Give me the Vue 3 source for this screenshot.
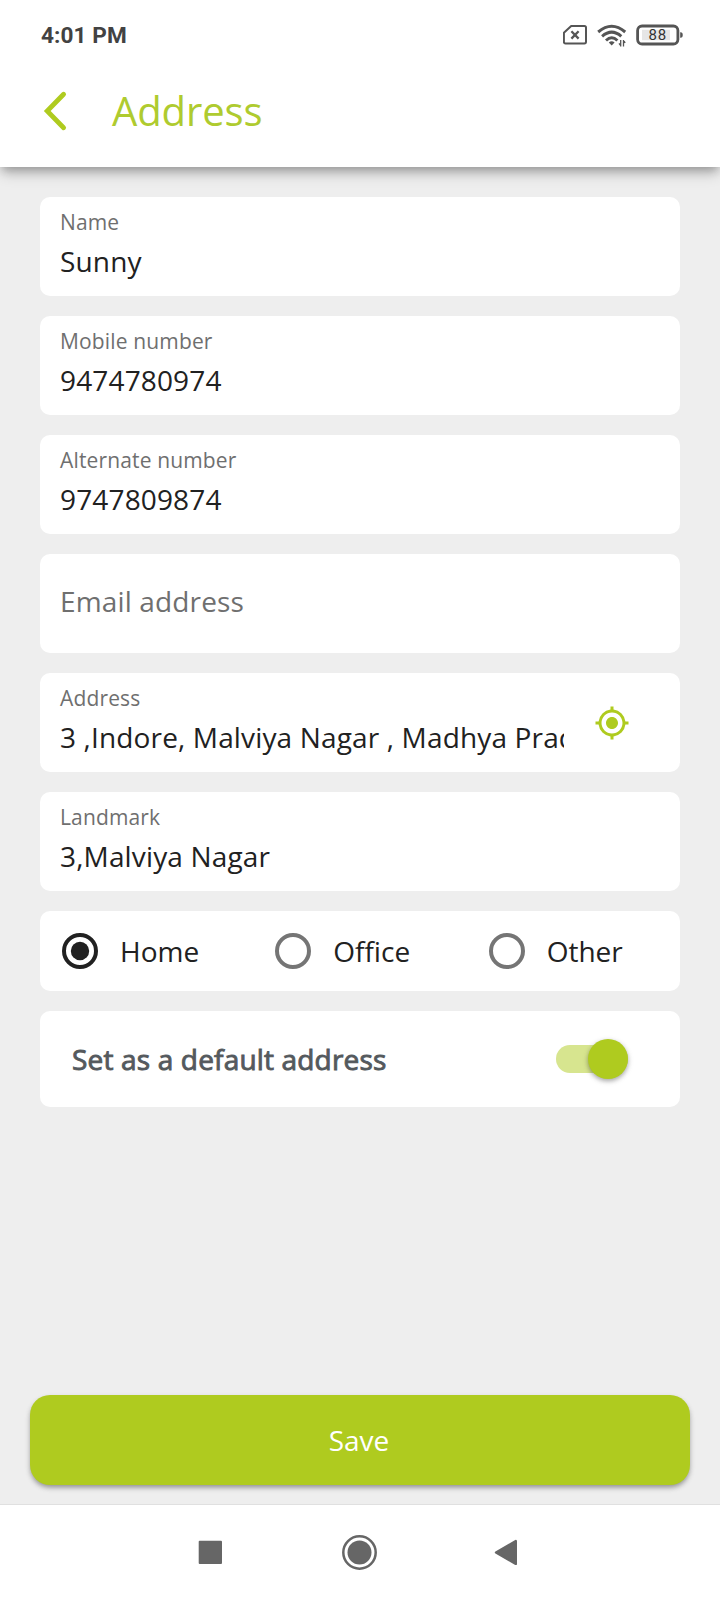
<script setup>
import { ref } from 'vue'

const fields = [
  { label: 'Name', value: 'Sunny' },
  { label: 'Mobile number', value: '9474780974' },
  { label: 'Alternate number', value: '9747809874' },
  { label: 'Email address', value: '' },
  { label: 'Address', value: '3 ,Indore, Malviya Nagar , Madhya Prad', locate: true },
  { label: 'Landmark', value: '3,Malviya Nagar' },
]
const kinds = ['Home', 'Office', 'Other']
const kind = ref('Home')
const isDefault = ref(true)
</script>

<template>
  <div class="screen">
    <header class="top">
      <div class="status">
        <span class="time">4:01 PM</span>
        <svg class="sys" width="120" height="24" viewBox="0 0 120 24" fill="none" stroke="#555">
          <path d="M8.2 3H21.4Q23 3 23 4.6V18.8Q23 20.4 21.4 20.4H2.4Q.9 20.4 .9 18.8V9.8Z" stroke-width="2" stroke-linejoin="round" />
          <path d="M8.4 8.2L15.6 15.6M15.6 8.2L8.4 15.6" stroke-width="2.3" />
          <g stroke-width="3">
            <path d="M35.2 9Q48.7 -2.4 62.2 9" />
            <path d="M39.1 13.3Q48.7 4.9 58.3 13.3" />
            <path d="M43 17.5Q48.7 12 54.4 17.5" />
          </g>
          <path d="M45.8 19.6Q48.7 17 51.6 19.6L48.7 22.4Z" fill="#555" stroke="none" />
          <path d="M57.7 17V23.4M60.5 17V23.4M56 20.4L57.7 22.6M60.5 17.5L62.2 19.8" stroke-width="1.3" />
          <rect x="74.6" y="3" width="40.3" height="18" rx="4.5" stroke-width="2.8" />
          <rect x="79" y="6.8" width="28" height="10.4" fill="#e6e6e6" stroke="none" />
          <path d="M117.2 9.2H118Q119.8 9.4 119.8 12T118 14.8H117.2Z" fill="#555" stroke="none" />
          <text x="94.8" y="17.2" class="pct" text-anchor="middle">88</text>
        </svg>
      </div>
      <div class="bar">
        <svg width="30" height="44" viewBox="0 0 30 44">
          <path d="M23.6 5.2L7.2 22L23.6 38.8" fill="none" stroke="#afcb1f" stroke-width="4.8" stroke-linecap="round" stroke-linejoin="miter" />
        </svg>
        <h1>Address</h1>
      </div>
    </header>

    <main class="form">
      <section v-for="f in fields" :key="f.label" class="card field" :class="{ empty: !f.value }">
        <div class="text">
          <label>{{ f.label }}</label>
          <p v-if="f.value">{{ f.value }}</p>
        </div>
        <svg v-if="f.locate" class="gps" width="36" height="36" viewBox="0 0 24 24" fill="#afcb1f">
          <path d="M12 8c-2.21 0-4 1.79-4 4s1.79 4 4 4 4-1.79 4-4-1.79-4-4-4zm8.94 3A8.994 8.994 0 0 0 13 3.06V1h-2v2.06A8.994 8.994 0 0 0 3.06 11H1v2h2.06A8.994 8.994 0 0 0 11 20.94V23h2v-2.06A8.994 8.994 0 0 0 20.94 13H23v-2h-2.06zM12 19c-3.87 0-7-3.13-7-7s3.13-7 7-7 7 3.13 7 7-3.13 7-7 7z" />
        </svg>
      </section>

      <section class="card kinds">
        <div v-for="k in kinds" :key="k" class="kind" @click="kind = k">
          <svg width="36" height="36" viewBox="0 0 36 36">
            <circle cx="18" cy="18" r="16" fill="none" :stroke="kind === k ? '#212121' : '#757575'" stroke-width="4" />
            <circle v-if="kind === k" cx="18" cy="18" r="9.2" fill="#212121" />
          </svg>
          <span>{{ k }}</span>
        </div>
      </section>

      <section class="card default">
        <span>Set as a default address</span>
        <div class="switch" :class="{ on: isDefault }" @click="isDefault = !isDefault">
          <i class="thumb"></i>
        </div>
      </section>
    </main>

    <button class="save">Save</button>

    <nav class="nav">
      <svg width="720" height="95" viewBox="0 0 720 95" fill="#666">
        <rect x="198.7" y="35.7" width="23.3" height="23.2" rx="1" />
        <circle cx="359.5" cy="47.5" r="16.2" fill="none" stroke="#666" stroke-width="2.5" />
        <circle cx="359.5" cy="47.5" r="12" />
        <path d="M496 47.5L515.8 36.1V58.9Z" stroke="#666" stroke-width="2.4" stroke-linejoin="round" />
      </svg>
    </nav>
  </div>
</template>

<style>
body {
  margin: 0;
  background: #eee;
}
</style>

<style scoped>
.screen {
  width: 720px;
  height: 1600px;
  display: flex;
  flex-direction: column;
  background: #eee;
  font-family: 'Open Sans', sans-serif;
  font-size: 28px;
  color: #212121;
  overflow: hidden;
}
.top {
  height: 167px;
  flex: none;
  background: #fff;
  box-shadow: 0 5px 9px -2px rgba(0, 0, 0, 0.24), 0 8px 14px -2px rgba(0, 0, 0, 0.2);
}
.status {
  height: 70px;
  display: flex;
  justify-content: space-between;
  padding: 0 37px 0 41px;
}
.time {
  font: 700 22.6px/72px Roboto, sans-serif;
  letter-spacing: 0.1px;
  color: #424242;
}
.sys {
  margin-top: 23px;
}
.pct {
  font: 400 15px Roboto, sans-serif;
  letter-spacing: 0.8px;
  fill: #333;
  stroke: none;
}
.bar {
  display: flex;
  align-items: center;
  height: 82px;
  padding-left: 40px;
}
h1 {
  margin: 0 0 0 42px;
  font-size: 40px;
  font-weight: 400;
  line-height: 82px;
  letter-spacing: -0.1px;
  color: #afcb2f;
}
.form {
  flex: 1;
  display: flex;
  flex-direction: column;
  gap: 20px;
  padding: 30px 40px 0;
}
.card {
  background: #fff;
  border-radius: 10px;
  box-sizing: border-box;
  display: flex;
}
.field {
  height: 99px;
  padding: 11px 20px 0;
  justify-content: space-between;
}
.text {
  width: 504px;
}
label {
  display: block;
  font-size: 21px;
  line-height: 28px;
  letter-spacing: 0.15px;
  color: #6f6f6f;
}
p {
  margin: 6px 0 0;
  line-height: 38px;
  letter-spacing: 0.15px;
  white-space: nowrap;
  overflow: hidden;
}
.empty label {
  font-size: 28px;
  line-height: 72px;
  letter-spacing: 0.15px;
}
.gps {
  margin: 21px 30px 0 0;
}
.kinds {
  height: 80px;
}
.kind {
  flex: 1;
  display: flex;
  align-items: center;
  padding-left: 22px;
}
.kind span {
  margin-left: 22px;
}
.default {
  height: 96px;
  align-items: center;
  justify-content: space-between;
  padding: 0 52px 0 32px;
}
.default span {
  color: #54595d;
  letter-spacing: 0.17px;
  -webkit-text-stroke: 0.9px #54595d;
}
.switch {
  width: 72px;
  height: 28px;
  border-radius: 14px;
  background: #ccc;
  display: flex;
  align-items: center;
}
.switch.on {
  background: #d7e58f;
  justify-content: flex-end;
}
.thumb {
  width: 40px;
  height: 40px;
  border-radius: 50%;
  background: #afcb1f;
  box-shadow: 0 2px 4px rgba(0, 0, 0, 0.28), 0 2px 7px rgba(0, 0, 0, 0.1);
}
.save {
  height: 90px;
  flex: none;
  margin: 0 30px 19px;
  padding: 0 2px 0 0;
  border: 0;
  border-radius: 20px;
  background: #afcb1f;
  color: #fff;
  font: 400 28px/90px 'Open Sans', sans-serif;
  box-shadow: 0 3px 5px -1px rgba(0, 0, 0, 0.34), 0 3px 6px rgba(0, 0, 0, 0.1);
}
.nav {
  height: 95px;
  flex: none;
  border-top: 1px solid #e0e0e0;
  background: #fff;
}
</style>
